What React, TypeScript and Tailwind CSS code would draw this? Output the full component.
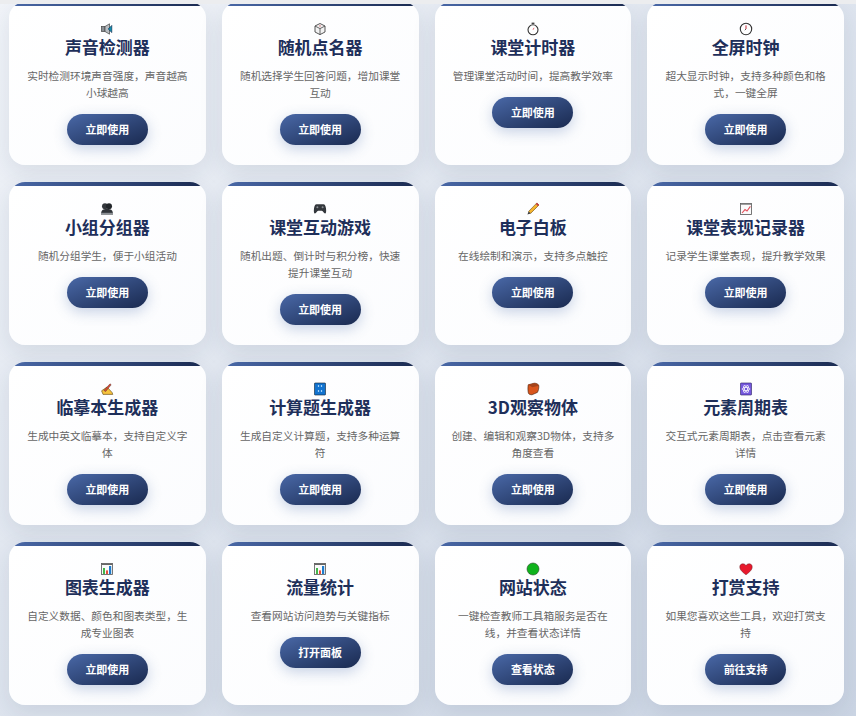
import type { ReactNode } from "react";

const Icon = ({ children }: { children: ReactNode }) => (
  <svg width="14" height="14" viewBox="0 0 14 14" className="block">
    {children}
  </svg>
);

const ICONS: Record<string, ReactNode> = {
  speaker: (
    <Icon>
      <rect x="1.5" y="4.5" width="3.5" height="5" fill="#8a8f94" stroke="#444" strokeWidth="0.7" />
      <path d="M5 4.5 9.5 1.8v10.4L5 9.5z" fill="#b9bec2" stroke="#444" strokeWidth="0.7" />
      <path d="M8.2 7 11.8 3.4v7.2z" fill="#0c8fb0" stroke="#124" strokeWidth="0.6" />
    </Icon>
  ),
  die: (
    <Icon>
      <path d="M7 1.5 12 4v6l-5 2.6L2 10V4z" fill="#f2f2f2" stroke="#444" strokeWidth="0.9" />
      <path d="M2 4l5 2.6L12 4M7 6.6v6" fill="none" stroke="#444" strokeWidth="0.8" />
      <circle cx="7" cy="3.9" r="0.7" fill="#d2434f" />
    </Icon>
  ),
  stopwatch: (
    <Icon>
      <rect x="5.6" y="0.6" width="2.8" height="1.4" fill="#444" />
      <circle cx="7" cy="7.8" r="5" fill="#fff" stroke="#333" strokeWidth="1.1" />
      <path d="M7 7.8 8 5.8" stroke="#e4606d" strokeWidth="0.9" />
    </Icon>
  ),
  clock: (
    <Icon>
      <circle cx="7" cy="7" r="5.7" fill="#fff" stroke="#333" strokeWidth="1.1" />
      <path d="M7 7V3.4" stroke="#c02c38" strokeWidth="1" />
      <path d="M7 7 5.8 8.2" stroke="#333" strokeWidth="0.8" />
    </Icon>
  ),
  people: (
    <Icon>
      <circle cx="5" cy="4.2" r="3" fill="#33373c" />
      <circle cx="9" cy="4.2" r="3" fill="#22262a" />
      <path d="M1 12.5c0-4.5 2-5.5 6-5.5s6 1 6 5.5z" fill="#2f3338" />
      <rect x="1" y="10.8" width="12" height="1.7" fill="#8b8f94" />
    </Icon>
  ),
  gamepad: (
    <Icon>
      <path d="M3.6 2.2h6.8c1.6 0 2.2 1.6 2.6 4.4.4 3 .1 5-1 5-1.2 0-1.8-2.8-3.2-2.8H5.2c-1.4 0-2 2.8-3.2 2.8-1.1 0-1.4-2-1-5 .4-2.8 1-4.4 2.6-4.4z" fill="#33373c" />
      <circle cx="4.4" cy="5.2" r="1" fill="#8b8f94" />
      <circle cx="9.6" cy="5.2" r="1" fill="#8b8f94" />
    </Icon>
  ),
  pencil: (
    <Icon>
      <path d="M10.9 0.9 13 3 4.6 11.4 2.6 9.4z" fill="#f5b52e" stroke="#6b4a12" strokeWidth="0.6" />
      <path d="M10.9 0.9 13 3 11.9 4.1 9.8 2z" fill="#c8304a" />
      <path d="M2.6 9.4 4.6 11.4 1.4 12.6z" fill="#3a3a3a" />
    </Icon>
  ),
  chartUp: (
    <Icon>
      <rect x="1.5" y="1.5" width="11" height="11" fill="#fbfbfb" stroke="#555" strokeWidth="0.8" />
      <rect x="1.5" y="1.5" width="11" height="1.2" fill="#777" />
      <path d="M3 11 6 7.6 8 9 11.4 4.4" fill="none" stroke="#e4505c" strokeWidth="1.1" />
    </Icon>
  ),
  writing: (
    <Icon>
      <path d="M3 12.4 1.6 8.8 7 5l5 5.4.8 2z" fill="#f7c23c" stroke="#5a4210" strokeWidth="0.6" />
      <path d="M3.8 8.4 10 1.8l1.2 1L5.6 9.6z" fill="#d8452e" stroke="#333" strokeWidth="0.4" />
    </Icon>
  ),
  abacus: (
    <Icon>
      <rect x="1.5" y="1" width="11" height="12" rx="0.6" fill="#1273cf" stroke="#123" strokeWidth="0.6" />
      <path d="M5.5 3v2M8.5 3v2M5.5 8v2M8.5 8v2" stroke="#9fd0f7" strokeWidth="1.2" />
    </Icon>
  ),
  brick: (
    <Icon>
      <path d="M2.2 2.8 8.2 1.2c2.2 0 4.4 1 4.6 2.6.2 2.2-.4 5-1.4 6.6L6 12.8c-1.6 0-3.2-.6-3.6-1.6-.6-2.6-.6-5.6-.2-8.4z" fill="#d9551c" stroke="#41210f" strokeWidth="0.6" />
      <path d="M2.2 2.8 8.2 1.2c2.2 0 4.4 1 4.6 2.6L6.4 5.2z" fill="#a5431a" />
    </Icon>
  ),
  atom: (
    <Icon>
      <rect x="1.5" y="1" width="11" height="12" rx="0.6" fill="#7558dd" stroke="#2a2060" strokeWidth="0.6" />
      <g stroke="#fff" strokeWidth="0.7" fill="none">
        <ellipse cx="7" cy="7" rx="4" ry="1.6" />
        <ellipse cx="7" cy="7" rx="4" ry="1.6" transform="rotate(60 7 7)" />
        <ellipse cx="7" cy="7" rx="4" ry="1.6" transform="rotate(120 7 7)" />
      </g>
    </Icon>
  ),
  bars: (
    <Icon>
      <rect x="1.5" y="1.5" width="11" height="11" fill="#fafafa" stroke="#555" strokeWidth="0.8" />
      <rect x="1.5" y="1.5" width="11" height="1.5" fill="#666" />
      <rect x="3" y="6" width="2" height="6" fill="#42b649" />
      <rect x="6" y="8.4" width="2" height="3.6" fill="#e7503f" />
      <rect x="9" y="4" width="2.2" height="8" fill="#1e7ccc" />
    </Icon>
  ),
  green: (
    <Icon>
      <circle cx="7" cy="7" r="6" fill="#0fb31c" stroke="#2a4a2a" strokeWidth="0.6" />
    </Icon>
  ),
  heart: (
    <Icon>
      <path d="M7 12.8C3 9.8.8 7.6.8 4.9.8 3 2.2 1.8 3.9 1.8c1.3 0 2.4.7 3.1 1.9.7-1.2 1.8-1.9 3.1-1.9 1.7 0 3.1 1.2 3.1 3.1 0 2.7-2.2 4.9-6.2 7.9z" fill="#e8192c" stroke="#6a1a20" strokeWidth="0.5" />
    </Icon>
  ),
};

const TOOLS = [
  { icon: "speaker", title: "声音检测器", desc: "实时检测环境声音强度，声音越高小球越高", action: "立即使用" },
  { icon: "die", title: "随机点名器", desc: "随机选择学生回答问题，增加课堂互动", action: "立即使用" },
  { icon: "stopwatch", title: "课堂计时器", desc: "管理课堂活动时间，提高教学效率", action: "立即使用" },
  { icon: "clock", title: "全屏时钟", desc: "超大显示时钟，支持多种颜色和格式，一键全屏", action: "立即使用" },
  { icon: "people", title: "小组分组器", desc: "随机分组学生，便于小组活动", action: "立即使用" },
  { icon: "gamepad", title: "课堂互动游戏", desc: "随机出题、倒计时与积分榜，快速提升课堂互动", action: "立即使用" },
  { icon: "pencil", title: "电子白板", desc: "在线绘制和演示，支持多点触控", action: "立即使用" },
  { icon: "chartUp", title: "课堂表现记录器", desc: "记录学生课堂表现，提升教学效果", action: "立即使用" },
  { icon: "writing", title: "临摹本生成器", desc: "生成中英文临摹本，支持自定义字体", action: "立即使用" },
  { icon: "abacus", title: "计算题生成器", desc: "生成自定义计算题，支持多种运算符", action: "立即使用" },
  { icon: "brick", title: "3D观察物体", desc: "创建、编辑和观察3D物体，支持多角度查看", action: "立即使用" },
  { icon: "atom", title: "元素周期表", desc: "交互式元素周期表，点击查看元素详情", action: "立即使用" },
  { icon: "bars", title: "图表生成器", desc: "自定义数据、颜色和图表类型，生成专业图表", action: "立即使用" },
  { icon: "bars", title: "流量统计", desc: "查看网站访问趋势与关键指标", action: "打开面板" },
  { icon: "green", title: "网站状态", desc: "一键检查教师工具箱服务是否在线，并查看状态详情", action: "查看状态" },
  { icon: "heart", title: "打赏支持", desc: "如果您喜欢这些工具，欢迎打赏支持", action: "前往支持" },
];

function ToolCard({ icon, title, desc, action }: (typeof TOOLS)[number]) {
  return (
    <div className="flex flex-col items-center overflow-hidden rounded-2xl bg-gradient-to-br from-white to-[#fbfcfe] pb-5 text-center shadow-[0_8px_24px_rgba(30,45,80,0.1)]">
      <div className="h-1 w-full shrink-0 bg-gradient-to-r from-[#4a69a8] to-[#1a2a50]" />
      <div className="mt-4 flex h-[14px] items-center justify-center">{ICONS[icon]}</div>
      <h3 className="-mt-px text-[17px] leading-[24px] font-bold text-[#1e2f5a]">{title}</h3>
      <p className="mt-2 px-4 text-[10.7px] leading-[17px] text-[#666]">{desc}</p>
      <button className="mt-[13px] h-[31px] w-[81px] rounded-[16px] bg-gradient-to-br from-[#4a69a8] to-[#1a2a50] text-[11px] font-bold text-white shadow-[0_4px_14px_rgba(74,105,168,0.3)]">
        {action}
      </button>
    </div>
  );
}

export default function App() {
  return (
    <div className="relative h-[716px] w-[856px] overflow-hidden bg-gradient-to-br from-[#f1f4f9] to-[#cbd5e4] pt-[2px] pr-3 pl-[9px] font-['Noto_Sans_CJK_SC','Liberation_Sans',sans-serif]">
      <div className="absolute inset-x-0 top-0 h-1 bg-[#ecedef]" />
      <div className="grid grid-cols-4 gap-x-4 gap-y-[17px]">
        {TOOLS.map((tool) => (
          <ToolCard key={tool.title} {...tool} />
        ))}
      </div>
    </div>
  );
}
